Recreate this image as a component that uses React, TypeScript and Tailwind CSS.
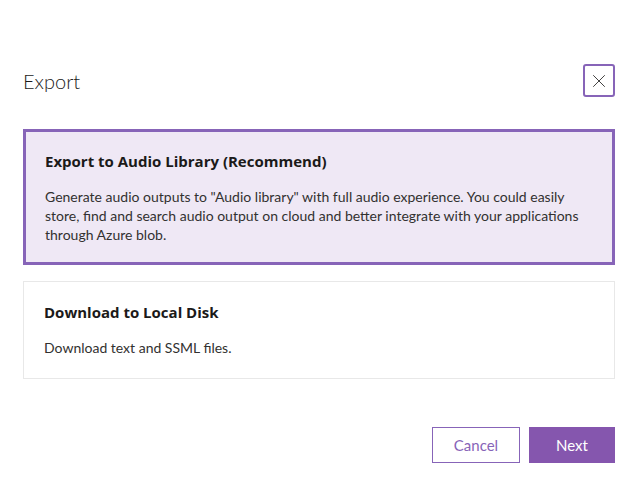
import { X } from "lucide-react";

const App = () => {
  return (
    <div className="w-[638px] h-[482px] bg-white font-['Lato','Liberation_Sans',sans-serif] text-[#1b1a19]">
      <div className="px-[23px] pt-[64px]">
        <div className="flex items-center justify-between h-[33px]">
          <h1 className="text-[20px] font-light leading-none">Export</h1>
          <button className="w-[32px] h-[33px] border-2 border-[#8764b8] rounded-[3px] flex items-center justify-center text-[#323130]">
            <X size={22} strokeWidth={1} />
          </button>
        </div>

        <div className="mt-[32px] flex flex-col gap-[16px]">
          <div className="border-[3px] border-[#8764b8] bg-[#efe8f5] pl-[19px] pr-[20px] pt-[19px] pb-[18px]">
            <h2 className="text-[15px] font-bold leading-[20px] font-['Open_Sans',sans-serif]">Export to Audio Library (Recommend)</h2>
            <p className="mt-[16px] text-[14px] leading-[19px] text-[#323130]">
              Generate audio outputs to "Audio library" with full audio experience. You could easily store, find and search audio output on cloud and better integrate with your applications through Azure blob.
            </p>
          </div>

          <div className="border border-[#e8e8e8] px-[20px] pt-[20px] pb-[21px]">
            <h2 className="text-[15px] font-bold leading-[20px] font-['Open_Sans',sans-serif]">Download to Local Disk</h2>
            <p className="mt-[16px] text-[14px] leading-[19px] text-[#323130]">Download text and SSML files.</p>
          </div>
        </div>

        <div className="mt-[48px] flex justify-end gap-[9px]">
          <button className="w-[88px] h-[36px] border border-[#8764b8] text-[#8764b8] text-[15px]">Cancel</button>
          <button className="w-[86px] h-[36px] bg-[#8556ae] text-white text-[15px]">Next</button>
        </div>
      </div>
    </div>
  );
};

export default App;
